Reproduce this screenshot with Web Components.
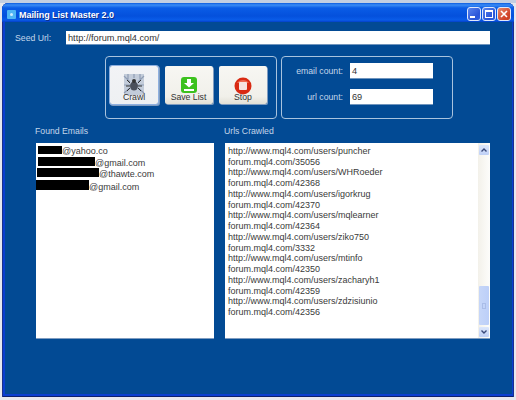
<!DOCTYPE html>
<html><head><meta charset="utf-8">
<style>
html,body{margin:0;padding:0;width:516px;height:400px;overflow:hidden;background:linear-gradient(#c3cfe2 0,#c3cfe2 3px,#e6e8ee 3px);font-family:"Liberation Sans",sans-serif}
</style></head><body>
<template id="t-win"><style>
:host{display:flex;flex-direction:column;box-sizing:border-box;width:512px;height:394px;margin:3px 0 0 2px;background:#0a3fd0;border-radius:6px 6px 0 0;padding:0 2px 3px 3px;box-shadow:inset 1px 0 0 #1c2f8c,inset -1px 0 0 #1c2f8c,inset 0 -1px 0 #0c1f6c}
.bar{flex:none;box-sizing:border-box;height:19px;margin:0 -2px 0 -3px;padding:4px 3px 0 5px;display:flex;align-items:center;gap:3px;border-radius:6px 6px 0 0;background:linear-gradient(#0a5be0 0,#3a8cf5 2px,#0a5ce6 5px,#0450dc 13px,#0a5ce8 17px,#0340c8 19px);color:#fff;font:bold 9px "Liberation Sans",sans-serif;text-shadow:1px 1px 0 #0b2f90;letter-spacing:-.05px}
.t{flex:1}
.ico{flex:none;width:9px;height:9px;background:#4fb6f4;border-radius:1px;display:flex;align-items:center;justify-content:center}
.ico i{width:3px;height:3px;background:#cfeeff;border-radius:50%}
.b{flex:none;width:14px;height:14px;box-sizing:border-box;border:1px solid #dfe8fb;border-radius:3px;background:linear-gradient(135deg,#5a85ee,#2a55d8 70%,#2f62e0);position:relative}
.btns{display:flex;gap:1px;margin-top:-2px}
.min::after{content:"";position:absolute;left:2px;bottom:2px;width:5px;height:2px;background:#fff}
.max::after{content:"";position:absolute;left:2px;top:2px;right:2px;bottom:2px;box-sizing:border-box;border:1px solid #fff;border-top-width:2px}
.x{background:linear-gradient(135deg,#e88a6a,#d2452a 70%,#c8401e)}
.x svg{position:absolute;left:2px;top:2px}
.c{flex:1;background:#024a94;min-height:0;display:flex;flex-direction:column}
</style>
<div class="bar"><span class="ico"><i></i></span><span class="t"><slot name="title"></slot></span>
<span class="btns"><span class="b min"></span><span class="b max"></span><span class="b x"><svg width="8" height="8" viewBox="0 0 8 8"><path d="M1 1l6 6M7 1L1 7" stroke="#fff" stroke-width="1.6" fill="none"/></svg></span></span></div>
<div class="c"><slot></slot></div></template>

<template id="t-field"><style>
:host{display:block;box-sizing:border-box;height:var(--h,15px);background:#fff;border-bottom:1px solid #6f94bd;color:#333;font:9.2px/var(--h,15px) "Liberation Sans",sans-serif;padding-left:2px;white-space:nowrap;overflow:hidden}
</style><slot></slot></template>

<template id="t-panel"><style>
:host{display:block;box-sizing:border-box;border:1px solid #a9c3de;border-radius:4px}
</style><slot></slot></template>

<template id="t-btn"><style>
:host{display:flex;flex-direction:column;align-items:center;justify-content:flex-end;box-sizing:border-box;width:48px;height:38px;background:linear-gradient(#f7f7f3,#f1f0ea 80%,#e2e0d6);border-radius:2px;box-shadow:1px 1px 0 #7f9cc0;color:#333;font:8.7px/10px "Liberation Sans",sans-serif;padding-bottom:2px;position:relative;white-space:nowrap}
:host([focus]){box-shadow:0 0 0 1px #8fb0e0,1px 1px 0 1px #7f9cc0;background:linear-gradient(#f2f3f6,#eef0f2)}
::slotted(svg){position:absolute;left:50%;transform:translateX(-50%);top:11px}
:host([focus]) ::slotted(svg){top:8px}
span{position:relative}
</style><slot name="icon"></slot><span><slot></slot></span></template>

<template id="t-list"><style>
:host{display:block;position:relative;box-sizing:border-box;height:196px;background:#fff;color:#3a3a3a;font:9px/10.73px "Liberation Sans",sans-serif;padding:3px 3px;overflow:hidden;border-bottom:1px solid #7f9cc0}
.sb{position:absolute;right:0;top:0;bottom:0;width:12px;background:linear-gradient(90deg,#f3f1ea,#fdfdfb);display:var(--sb,none)}
.u,.d{position:absolute;left:1px;width:10px;height:10px;background:linear-gradient(#dce7fb,#bfd0f6);border-radius:1px}
.u{top:2px}.d{bottom:1px}
.th{position:absolute;left:1px;width:10px;top:143px;bottom:13px;background:linear-gradient(90deg,#c6d6f8,#bccff8);border-radius:1px}
.th::after{content:"";position:absolute;left:3px;top:17px;width:4px;height:6px;border:1px solid #aabde8;box-sizing:border-box}
svg{position:absolute;left:2px;top:3px}
</style><slot></slot><div class="sb"><div class="u"><svg width="6" height="4" viewBox="0 0 6 4"><path d="M.5 3.5L3 1l2.500 2.500" stroke="#3a4a7a" stroke-width="1.400" fill="none"/></svg></div><div class="th"></div><div class="d"><svg width="6" height="4" viewBox="0 0 6 4"><path d="M.5.5L3 3 5.500.5" stroke="#3a4a7a" stroke-width="1.400" fill="none"/></svg></div></div></template>

<template id="t-app"><style>
:host{display:flex;flex-direction:column;flex:1;color:#c4d6ea;font:8.700px/11px "Liberation Sans",sans-serif}
.seed{display:flex;align-items:center;padding:9px 22px 0 10px;flex:none;--h:14px}
.seed span{width:51px;flex:none}
.seed mlm-field{flex:1}
.top{display:flex;gap:4px;margin:11px 0 0 100px}
.tools{box-sizing:border-box;width:170px;height:61px;display:flex;gap:6.5px;padding:9px 0 0 4px}
.cnt{box-sizing:border-box;width:170px;height:61px;padding:6px 0 0 0;display:grid;grid-template-columns:61px 83px;column-gap:7px;row-gap:10px;align-content:start;--h:16px}
.cnt span{text-align:right;line-height:16px}
.heads{display:flex;margin:7px 0 0 30px;height:17px;align-items:flex-start}
.heads span:first-child{width:189px}
.lists{display:flex;gap:11px;margin:0 0 0 31px}
.a{width:178px}.b{width:265px;--sb:block}
</style>
<div class="seed"><span>Seed Url:</span><mlm-field><slot name="seed"></slot></mlm-field></div>
<div class="top"><mlm-panel><div class="tools"><slot name="buttons"></slot></div></mlm-panel>
<mlm-panel><div class="cnt"><span>email count:</span><mlm-field>4</mlm-field><span>url count:</span><mlm-field>69</mlm-field></div></mlm-panel></div>
<div class="heads"><span>Found Emails</span><span>Urls Crawled</span></div>
<div class="lists"><mlm-list class="a"><slot name="emails"></slot></mlm-list><mlm-list class="b"><slot name="urls"></slot></mlm-list></div>
</template>

<script>
function def(n,t){customElements.define(n,class extends HTMLElement{constructor(){super();this.attachShadow({mode:'open'}).appendChild(document.getElementById(t).content.cloneNode(true));}});}
def('mlm-window','t-win');def('mlm-field','t-field');def('mlm-panel','t-panel');def('mlm-btn','t-btn');def('mlm-list','t-list');def('mlm-app','t-app');
</script>

<mlm-window>
<span slot="title">Mailing List Master 2.0</span>
<mlm-app>
<span slot="seed">http://forum.mql4.com/</span>
<mlm-btn slot="buttons" focus><svg slot="icon" width="22" height="22" viewBox="0 0 22 22"><rect x="1" y="0" width="20" height="21" fill="#c3ccda"/><path d="M1 2l6 6M21 2l-6 6M1 19l6-5M21 19l-6-5M1 11h20M11 0v4M5 0v5M17 0v5" stroke="#8f9db5" stroke-width="1.200" fill="none"/><ellipse cx="11" cy="12" rx="4" ry="4.500" fill="#4a4f5a"/><circle cx="11" cy="7" r="2" fill="#333"/><path d="M7 9L4 6M7 12H3M7 14l-3 3M15 9l3-3M15 12h4M15 14l3 3" stroke="#333" fill="none"/></svg>Crawl</mlm-btn>
<mlm-btn slot="buttons"><svg slot="icon" width="16" height="16" viewBox="0 0 16 16"><rect x="0" y="0" width="16" height="16" rx="3" fill="#3cc21e"/><path d="M6 2h4v4h3L8 10.500 3 6h3z" fill="#fff"/><rect x="3" y="12" width="10" height="2" fill="#fff"/></svg>Save List</mlm-btn>
<mlm-btn slot="buttons"><svg slot="icon" width="18" height="18" viewBox="0 0 18 18"><circle cx="9" cy="9" r="8.500" fill="#d92a12"/><path d="M3 6a7 6 0 0 1 12 0" fill="#ee6a50"/><rect x="5" y="5" width="8" height="8" rx="1" fill="#f6e4e0"/></svg>Stop</mlm-btn>
<div slot="emails" style="margin-left:-1px"><span style="display:inline-block;width:24px;height:8px;background:#000"></span>@yahoo.co</div>
<div slot="emails" style="margin-left:-1px"><span style="display:inline-block;width:57px;height:9px;background:#000"></span>@gmail.com</div>
<div slot="emails" style="margin-left:-2px"><span style="display:inline-block;width:62px;height:9px;background:#000"></span>@thawte.com</div>
<div slot="emails" style="margin-left:-3px"><span style="display:inline-block;width:53px;height:10px;background:#000"></span>@gmail.com</div>
<div slot="urls">http://www.mql4.com/users/puncher</div>
<div slot="urls">forum.mql4.com/35056</div>
<div slot="urls">http://www.mql4.com/users/WHRoeder</div>
<div slot="urls">forum.mql4.com/42368</div>
<div slot="urls">http://www.mql4.com/users/igorkrug</div>
<div slot="urls">forum.mql4.com/42370</div>
<div slot="urls">http://www.mql4.com/users/mqlearner</div>
<div slot="urls">forum.mql4.com/42364</div>
<div slot="urls">http://www.mql4.com/users/ziko750</div>
<div slot="urls">forum.mql4.com/3332</div>
<div slot="urls">http://www.mql4.com/users/mtinfo</div>
<div slot="urls">forum.mql4.com/42350</div>
<div slot="urls">http://www.mql4.com/users/zacharyh1</div>
<div slot="urls">forum.mql4.com/42359</div>
<div slot="urls">http://www.mql4.com/users/zdzisiunio</div>
<div slot="urls">forum.mql4.com/42356</div>
</mlm-app>
</mlm-window>
</body></html>
